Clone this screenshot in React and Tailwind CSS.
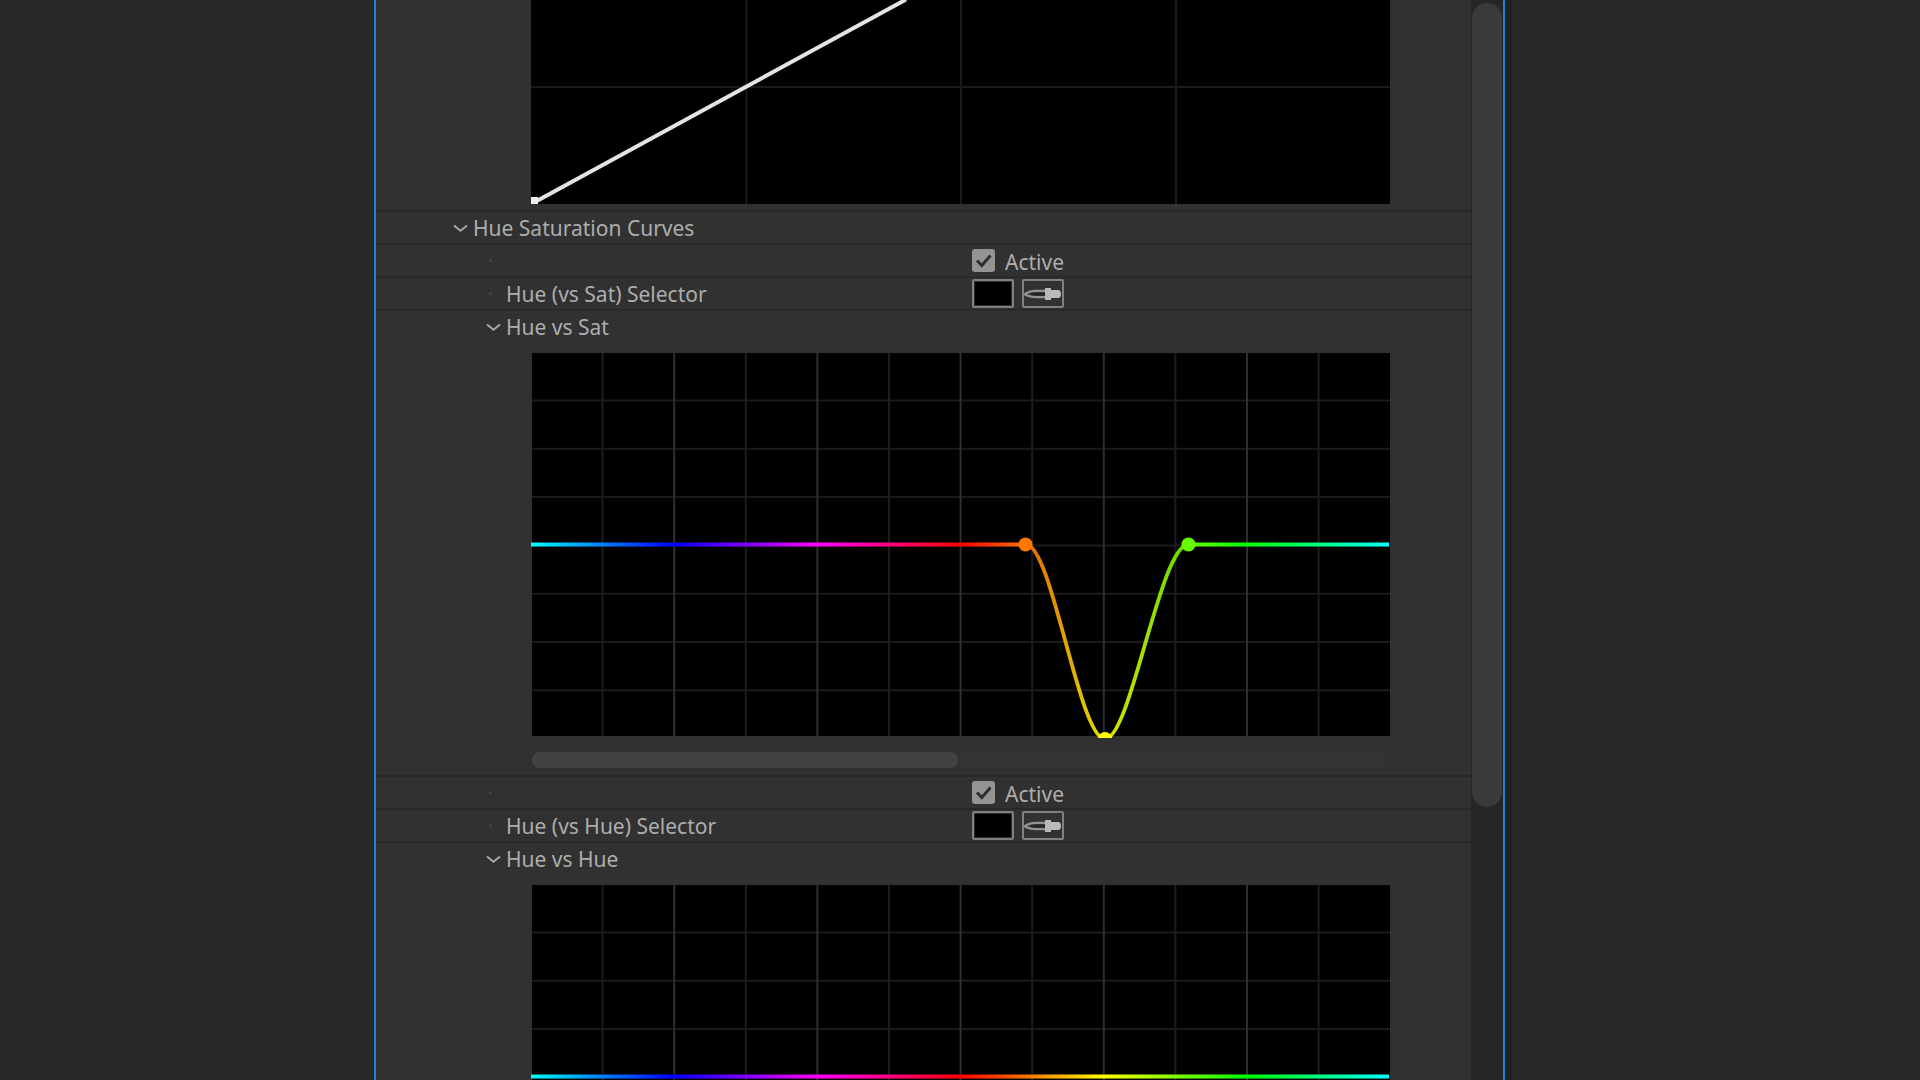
import { useState } from 'react';

const hueStops = [
  { offset: '0', color: '#00ffff' },
  { offset: '0.1667', color: '#0000ff' },
  { offset: '0.3333', color: '#ff00ff' },
  { offset: '0.5', color: '#ff0000' },
  { offset: '0.6667', color: '#ffff00' },
  { offset: '0.8333', color: '#00ff00' },
  { offset: '1', color: '#00ffff' },
];

const curves = [
  {
    id: 'sat',
    selector: 'Hue (vs Sat) Selector',
    title: 'Hue vs Sat',
    flat: 'M0 191.5 H495 M657.5 191.5 H858',
    bend: 'M495 191.5 C521 191.5 548 386 574 386 C600 386 629 191.5 657.5 191.5',
    points: [
      { x: 494.5, y: 191.5, color: '#ff7800' },
      { x: 574, y: 386, color: '#ffff00' },
      { x: 657.5, y: 191.5, color: '#64ff00' },
    ],
  },
  {
    id: 'hue',
    selector: 'Hue (vs Hue) Selector',
    title: 'Hue vs Hue',
    flat: 'M0 191.5 H858',
    points: [],
  },
];

function Chevron() {
  return (
    <svg className="w-4 h-4 shrink-0" viewBox="0 0 16 16" fill="none" stroke="#a8a8a8" strokeWidth={2}>
      <path d="M1 5.5 L7.5 10.8 L14 5.5" />
    </svg>
  );
}

function Eyedropper() {
  return (
    <svg className="w-[38px] h-6" viewBox="0 0 38 24" fill="none">
      <path d="M22 8.8 H12 C7 9 3 10 0.5 12.3 C4 14.4 8 15.2 12 15.2 H22" stroke="#929292" strokeWidth={2.2} />
      <path d="M7 12.2 H22" stroke="#262626" strokeWidth={2.4} />
      <path d="M21 6 H27 V8 H34 C36.5 8 37 10 37 12 C37 14 36.5 16 34 16 H27 V18 H21 Z" fill="#b9b9b9" />
    </svg>
  );
}

function Disclosure({ title, open, onToggle }) {
  return (
    <button type="button" aria-expanded={open} onClick={onToggle} className="flex items-center gap-1">
      <Chevron />
      <span>{title}</span>
    </button>
  );
}

function LinearGraph() {
  return (
    <svg className="block w-full h-[204px]" viewBox="0 0 859 204" preserveAspectRatio="none">
      <rect width="859" height="204" fill="#000" />
      <g stroke="#1b1b1b" strokeWidth={2}>
        <path d="M215.5 0 V204 M430 0 V204 M645 0 V204 M0 87 H859" />
      </g>
      <path d="M3 202.5 L375 -0.5" stroke="#e4e4e4" strokeWidth={4} />
      <rect x="0" y="197" width="7" height="7" fill="#efefef" />
    </svg>
  );
}

function HueGraph({ curve }) {
  return (
    <svg className="block w-full h-[385px]" viewBox="0 0 859 385" preserveAspectRatio="none">
      <defs>
        <linearGradient id={`spectrum-${curve.id}`} gradientUnits="userSpaceOnUse" x1="0" y1="0" x2="859" y2="0">
          {hueStops.map((stop) => (
            <stop key={stop.offset} offset={stop.offset} stopColor={stop.color} />
          ))}
        </linearGradient>
      </defs>
      <rect x="1" width="858" height="383" fill="#000" />
      {/* Grid */}
      {[...Array(7)].map((_, i) => (
        <path key={`h${i}`} d={`M1 ${47.5 + i * 48.3} H859`} stroke="#1b1b1b" strokeWidth={2} />
      ))}
      {[...Array(11)].map((_, i) => (
        <path
          key={`v${i}`}
          d={`M${(i + 1) * 71.6} 0 V383`}
          stroke={i % 2 ? '#2f2f2f' : '#1d1d1d'}
          strokeWidth={2}
        />
      ))}
      {curve.bend && (
        <path d={curve.bend} fill="none" stroke={`url(#spectrum-${curve.id})`} strokeWidth={3.8} opacity={0.88} />
      )}
      <path d={curve.flat} fill="none" stroke={`url(#spectrum-${curve.id})`} strokeWidth={4} />
      {curve.points.map((point) => (
        <circle key={point.x} cx={point.x} cy={point.y} r="7" fill={point.color} />
      ))}
    </svg>
  );
}

function CurveSection({ curve }) {
  const [open, setOpen] = useState(true);
  const [active, setActive] = useState(true);

  return (
    <section>
      {/* Active */}
      <div className="grid grid-cols-[596fr_499fr] h-[33px] border-t-2 border-[#292929] items-center">
        <span className="ml-[113px] w-[3px] h-[3px] rounded-full bg-[#444444]" />
        <label className="flex items-center gap-[10px]">
          <span className="relative w-[23px] h-[23px] shrink-0">
            <input
              type="checkbox"
              checked={active}
              onChange={() => setActive(!active)}
              className="block w-full h-full appearance-none rounded-[3px] bg-[#949494]"
            />
            {active && (
              <svg className="absolute inset-0 pointer-events-none" viewBox="0 0 23 23" fill="none" stroke="#2f2f2f" strokeWidth={3}>
                <path d="M5 11.5 L9.8 16.5 L18.5 6.5" />
              </svg>
            )}
          </span>
          <span className="pt-[2px]">Active</span>
        </label>
      </div>

      {/* Selector */}
      <div className="grid grid-cols-[596fr_499fr] h-[33px] border-t-2 border-[#292929] items-center">
        <div className="flex items-center pl-[113px]">
          <span className="w-[3px] h-[3px] rounded-full bg-[#444444]" />
          <span className="ml-[14px]">{curve.selector}</span>
        </div>
        <div className="flex gap-2">
          <button type="button" aria-label="Color swatch" className="w-[42px] h-[29px] p-px rounded-[2px] border-2 border-[#808080]">
            <span className="block w-full h-full bg-black" />
          </button>
          <button type="button" aria-label="Eyedropper" className="w-[42px] h-[29px] flex items-center justify-center rounded-[2px] border-2 border-[#808080]">
            <Eyedropper />
          </button>
        </div>
      </div>

      {/* Curve */}
      <div className="border-t-2 border-[#292929]">
        <div className="flex items-center h-[31px] pl-[110px]">
          <Disclosure title={curve.title} open={open} onToggle={() => setOpen(!open)} />
        </div>
        {open && (
          <div className="pt-[11px] pb-[7px] pl-[155px] pr-[81px]">
            <HueGraph curve={curve} />
            <div className="mt-[14px] h-4 pl-px pr-[6px] rounded-full bg-[#333333]">
              <div className="w-1/2 h-full rounded-full bg-[#424242]" />
            </div>
          </div>
        )}
      </div>
    </section>
  );
}

export default function App() {
  const [open, setOpen] = useState(true);

  return (
    <div className="h-screen overflow-hidden grid grid-cols-[374fr_1138fr_408fr] bg-[#292929] text-[#adadad] text-[21px] leading-6 font-['Noto_Sans',sans-serif]">
      <main className="col-start-2 min-h-0 flex border-r-[7px] border-[#212121]">
        <div className="flex-1 min-w-0 flex border-x-2 border-[#2681d8]">
          <div className="flex-1 min-w-0 overflow-hidden bg-[#313131]">
            <div className="pb-[6px] pl-[155px] pr-[81px]">
              <LinearGraph />
            </div>
            <div className="flex items-center h-[33px] pl-[77px] border-t-2 border-[#292929]">
              <Disclosure title="Hue Saturation Curves" open={open} onToggle={() => setOpen(!open)} />
            </div>
            {open && curves.map((curve) => <CurveSection key={curve.id} curve={curve} />)}
          </div>

          {/* Scrollbar */}
          <div className="w-8 shrink-0 px-px pt-[3px] pb-[5px] bg-[#262626]">
            <div className="h-3/4 rounded-full bg-[#3a3a3a]" />
          </div>
        </div>
      </main>
    </div>
  );
}
